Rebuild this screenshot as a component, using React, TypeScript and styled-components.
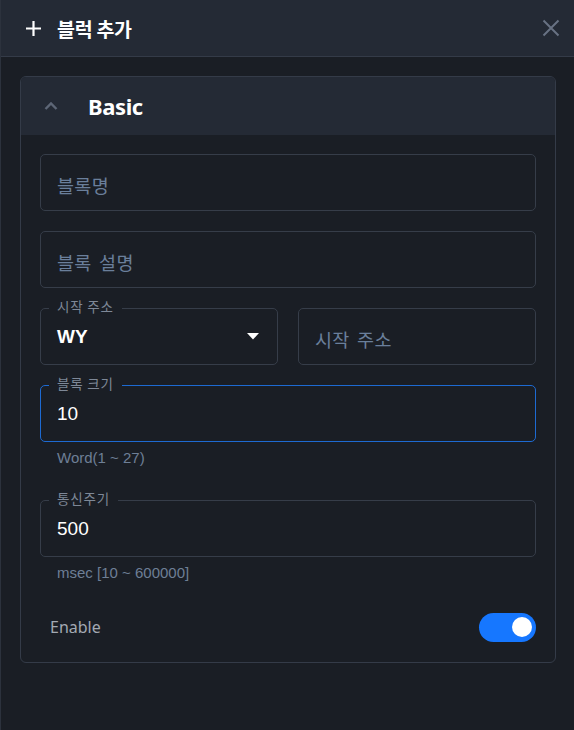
import React from "react";
import styled, { createGlobalStyle } from "styled-components";

const Global = createGlobalStyle`
  html, body { margin: 0; padding: 0; background: #1a1e25; }
  body { font-family: "Noto Sans", "Noto Sans CJK KR", sans-serif; }
  * { box-sizing: border-box; }
`;

const Panel = styled.div`
  width: 574px;
  height: 730px;
  background: #1a1e25;
  border-left: 1px solid #2c323d;
  display: flex;
  flex-direction: column;
`;

const Header = styled.header`
  height: 57px;
  flex: none;
  background: #242a35;
  border-bottom: 1px solid #343b48;
  display: flex;
  align-items: center;
  padding: 0 13px 0 24px;
`;

const Title = styled.h1`
  margin: 0 0 0 15px;
  flex: 1;
  font-family: "Noto Sans CJK KR", sans-serif;
  font-size: 19.5px;
  font-weight: 700;
  color: #ffffff;
  letter-spacing: -0.3px;
`;

const IconButton = styled.button`
  border: 0;
  background: none;
  padding: 0;
  display: flex;
  cursor: pointer;
`;

const Content = styled.div`
  padding: 19px 18px 0 19px;
`;

const Card = styled.section`
  border: 1px solid #343b48;
  border-radius: 6px;
  overflow: hidden;
`;

const CardHeader = styled.div`
  height: 58px;
  background: #242a35;
  display: flex;
  align-items: center;
  padding-left: 22px;
`;

const CardTitle = styled.span`
  margin-left: 29px;
  font-family: "Noto Sans", sans-serif;
  font-size: 22px;
  font-weight: 700;
  color: #ffffff;
  letter-spacing: -0.4px;
`;

const CardBody = styled.div`
  padding: 19px 19px 21px 19px;
  display: flex;
  flex-direction: column;
  gap: 20px;
`;

const Row = styled.div`
  display: grid;
  grid-template-columns: 1fr 1fr;
  gap: 20px;
`;

const FieldWrap = styled.div`
  display: flex;
  flex-direction: column;
`;

const Outline = styled.div<{ $focused?: boolean }>`
  height: 57px;
  padding: 0 16px;
  border: 1px solid ${(p) => (p.$focused ? "#1d6ad2" : "#363d49")};
  border-radius: 5px;
  display: flex;
  align-items: center;
  position: relative;
`;

const Legend = styled.span`
  position: absolute;
  top: -12px;
  left: 8px;
  padding: 0 8px;
  background: #1a1e25;
  font-family: "Noto Sans CJK KR", sans-serif;
  font-size: 13.5px;
  line-height: 18px;
  color: #7e8897;
  letter-spacing: 0.8px;
`;

const Placeholder = styled.span`
  padding-top: 5px;
  font-family: "Noto Sans CJK KR", sans-serif;
  font-size: 18.5px;
  font-weight: 400;
  color: #6a7f9b;
  word-spacing: 3px;
  letter-spacing: 0.3px;
`;

const Value = styled.span<{ $bold?: boolean }>`
  flex: 1;
  font-family: "Liberation Sans", Arial, sans-serif;
  font-size: 19px;
  font-weight: ${(p) => (p.$bold ? 700 : 400)};
  color: #ffffff;
`;

const Helper = styled.div`
  padding: 7px 0 0 17px;
  height: 38px;
  font-family: "Liberation Sans", Arial, sans-serif;
  font-size: 15px;
  color: #6e7f96;
  margin-bottom: -20px;
`;

const Spacer = styled.div`
  height: 0;
`;

const ToggleRow = styled.div`
  display: flex;
  align-items: center;
  justify-content: space-between;
  padding-left: 10px;
  height: 28px;
  margin-top: 18px;
`;

const ToggleLabel = styled.span`
  font-family: "Noto Sans", sans-serif;
  font-size: 16px;
  color: #a3a9b3;
`;

const Switch = styled.button<{ $on: boolean }>`
  width: 57px;
  height: 29px;
  border-radius: 15px;
  border: 0;
  padding: 0 4px;
  background: ${(p) => (p.$on ? "#1677ff" : "#3a414d")};
  display: flex;
  align-items: center;
  justify-content: ${(p) => (p.$on ? "flex-end" : "flex-start")};
`;

const Knob = styled.span`
  width: 20px;
  height: 20px;
  border-radius: 50%;
  background: #ffffff;
`;

function Field({
  label,
  placeholder,
  value,
  bold,
  focused,
  select,
  helper,
}: {
  label?: string;
  placeholder?: string;
  value?: string;
  bold?: boolean;
  focused?: boolean;
  select?: boolean;
  helper?: string;
}) {
  return (
    <FieldWrap>
      <Outline $focused={focused}>
        {label && <Legend>{label}</Legend>}
        {value ? <Value $bold={bold}>{value}</Value> : <Placeholder>{placeholder}</Placeholder>}
        {select && (
          <svg width="12" height="7" viewBox="0 0 12 7" style={{ marginRight: 2 }}>
            <path d="M0 0 L12 0 L6 6.5 Z" fill="#ffffff" />
          </svg>
        )}
      </Outline>
      {helper && <Helper>{helper}</Helper>}
    </FieldWrap>
  );
}

export default function App() {
  return (
    <>
      <Global />
      <Panel>
        <Header>
          <svg width="17" height="17" viewBox="0 0 17 17">
            <path d="M8.5 1 V16 M1 8.5 H16" stroke="#ffffff" strokeWidth="2.2" />
          </svg>
          <Title>블럭 추가</Title>
          <IconButton aria-label="close">
            <svg width="20" height="20" viewBox="0 0 20 20">
              <path d="M2.5 2.5 L17.5 17.5 M17.5 2.5 L2.5 17.5" stroke="#687283" strokeWidth="2" />
            </svg>
          </IconButton>
        </Header>
        <Content>
          <Card>
            <CardHeader>
              <svg width="16" height="10" viewBox="0 0 16 10">
                <path d="M2.5 8 L8 2.5 L13.5 8" stroke="#5d6676" strokeWidth="2.4" fill="none" />
              </svg>
              <CardTitle>Basic</CardTitle>
            </CardHeader>
            <CardBody>
              <Field placeholder="블록명" />
              <Field placeholder="블록 설명" />
              <Row>
                <Field label="시작 주소" value="WY" bold select />
                <Field placeholder="시작 주소" />
              </Row>
              <Field label="블록 크기" value="10" focused helper="Word(1 ~ 27)" />
              <Spacer />
              <Field label="통신주기" value="500" helper="msec [10 ~ 600000]" />
              <ToggleRow>
                <ToggleLabel>Enable</ToggleLabel>
                <Switch $on aria-label="enable">
                  <Knob />
                </Switch>
              </ToggleRow>
            </CardBody>
          </Card>
        </Content>
      </Panel>
    </>
  );
}
